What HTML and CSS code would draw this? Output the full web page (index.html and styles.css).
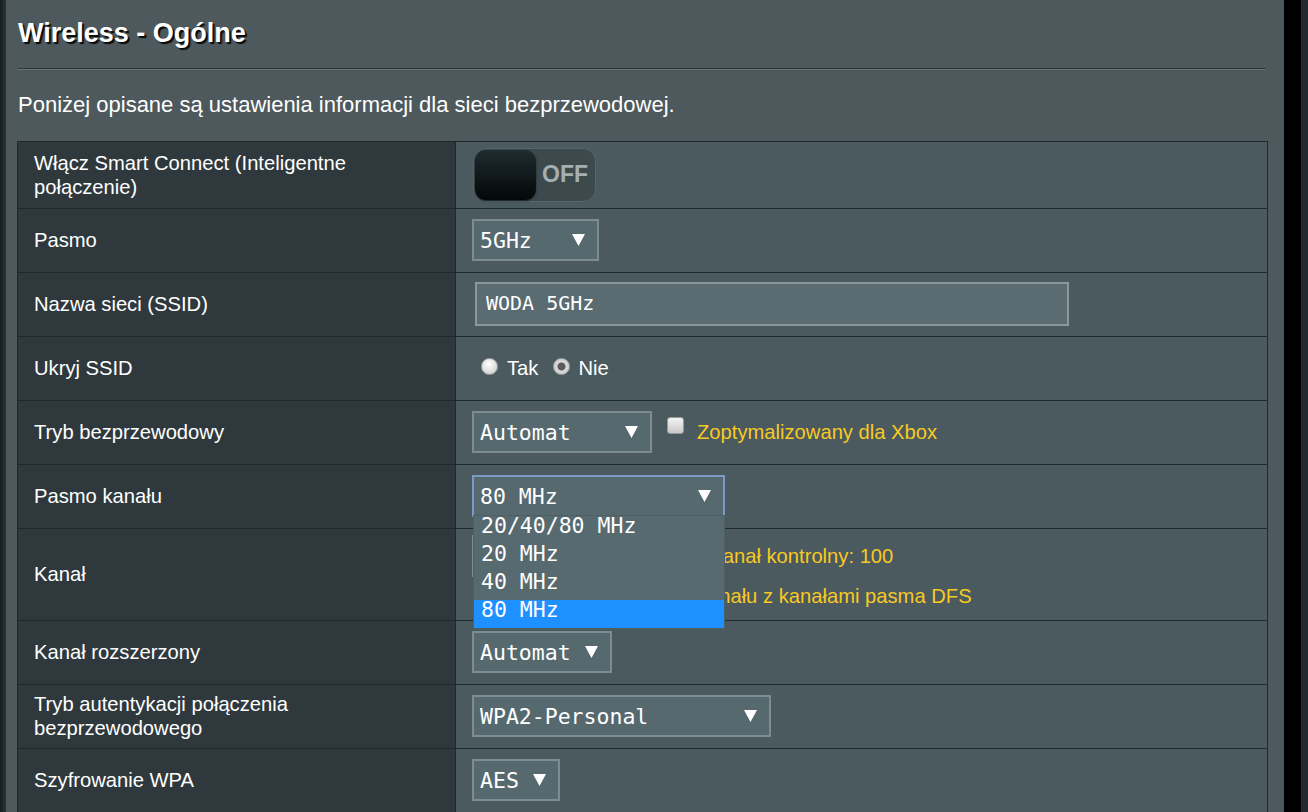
FILE: index.html
```html
<!DOCTYPE html>
<html lang="pl">
<head>
<meta charset="utf-8">
<title>Wireless - Ogólne</title>
<link rel="stylesheet" href="styles.css">
</head>
<body>
<div class="page">
  <div class="edge-left"></div>
  <main class="panel">
    <h1 class="title">Wireless - Ogólne</h1>
    <div class="divider"></div>
    <p class="desc">Poniżej opisane są ustawienia informacji dla sieci bezprzewodowej.</p>

    <div class="settings">
      <div class="row row-first">
        <div class="label">Włącz Smart Connect (Inteligentne połączenie)</div>
        <div class="value">
          <div class="toggle"><span class="knob"></span><span class="toggle-text">OFF</span></div>
        </div>
      </div>

      <div class="row">
        <div class="label">Pasmo</div>
        <div class="value">
          <div class="select w-band"><span>5GHz</span><svg class="arrow" viewBox="0 0 13 12" width="13" height="12"><polygon points="0,0 13,0 6.5,12"/></svg></div>
        </div>
      </div>

      <div class="row">
        <div class="label">Nazwa sieci (SSID)</div>
        <div class="value">
          <input class="ssid" type="text" value="WODA 5GHz">
        </div>
      </div>

      <div class="row">
        <div class="label">Ukryj SSID</div>
        <div class="value">
          <span class="radio"></span><span class="radio-label">Tak</span>
          <span class="radio checked"></span><span class="radio-label">Nie</span>
        </div>
      </div>

      <div class="row">
        <div class="label">Tryb bezprzewodowy</div>
        <div class="value">
          <div class="select w-mode"><span>Automat</span><svg class="arrow" viewBox="0 0 13 12" width="13" height="12"><polygon points="0,0 13,0 6.5,12"/></svg></div>
          <span class="checkbox cb-xbox"></span><span class="hint hint-xbox">Zoptymalizowany dla Xbox</span>
        </div>
      </div>

      <div class="row">
        <div class="label">Pasmo kanału</div>
        <div class="value">
          <div class="select-wrap">
            <div class="select w-width focus"><span>80 MHz</span><svg class="arrow" viewBox="0 0 13 12" width="13" height="12"><polygon points="0,0 13,0 6.5,12"/></svg></div>
            <ul class="dropdown">
              <li class="opt">20/40/80 MHz</li>
              <li class="opt">20 MHz</li>
              <li class="opt">40 MHz</li>
              <li class="opt selected">80 MHz</li>
            </ul>
          </div>
        </div>
      </div>

      <div class="row row-channel">
        <div class="label">Kanał</div>
        <div class="value value-channel">
          <div class="line">
            <div class="select fit"><span>Automat</span><svg class="arrow" viewBox="0 0 13 12" width="13" height="12"><polygon points="0,0 13,0 6.5,12"/></svg></div>
            <span class="hint hint-channel">Aktualny kanał kontrolny: 100</span>
          </div>
          <div class="line line-dfs">
            <span class="checkbox cb-dfs"></span><span class="hint">Automatyczny wybór kanału z kanałami pasma DFS</span>
          </div>
        </div>
      </div>

      <div class="row">
        <div class="label">Kanał rozszerzony</div>
        <div class="value">
          <div class="select fit"><span>Automat</span><svg class="arrow" viewBox="0 0 13 12" width="13" height="12"><polygon points="0,0 13,0 6.5,12"/></svg></div>
        </div>
      </div>

      <div class="row">
        <div class="label">Tryb autentykacji połączenia bezprzewodowego</div>
        <div class="value">
          <div class="select w-auth"><span>WPA2-Personal</span><svg class="arrow" viewBox="0 0 13 12" width="13" height="12"><polygon points="0,0 13,0 6.5,12"/></svg></div>
        </div>
      </div>

      <div class="row">
        <div class="label">Szyfrowanie WPA</div>
        <div class="value">
          <div class="select fit"><span>AES</span><svg class="arrow" viewBox="0 0 13 12" width="13" height="12"><polygon points="0,0 13,0 6.5,12"/></svg></div>
        </div>
      </div>
    </div>
  </main>
  <div class="scrollbar"></div>
  <div class="edge-right"></div>
</div>
</body>
</html>
```

FILE: styles.css
```css
html, body {
  margin: 0;
  padding: 0;
}

body {
  background: #1e2a2e;
  font-family: "Liberation Sans", Arial, sans-serif;
  color: #ffffff;
}

.page {
  display: flex;
  height: 812px;
  overflow: hidden;
}

.edge-left {
  width: 6px;
  flex: none;
  background: linear-gradient(to right, #141c1f, #2b3539);
}

.panel {
  flex: 1;
  min-width: 0;
  background: #4d595d;
  padding: 17px 16px 0 11px;
  overflow: hidden;
}

.scrollbar {
  width: 17px;
  flex: none;
  background: #000000;
}

.edge-right {
  width: 7px;
  flex: none;
  background: #1f2b2f;
}

.title {
  margin: 0 0 0 1px;
  font-size: 27px;
  line-height: 32px;
  font-weight: bold;
  color: #ffffff;
  text-shadow: 2px 2px 1px rgba(0, 0, 0, 0.9);
}

.divider {
  margin: 19px 2px 0 1px;
  height: 1px;
  background: #2a3337;
  border-bottom: 1px solid #6b777b;
}

.desc {
  margin: 22px 0 0 1px;
  font-size: 22px;
  line-height: 26px;
  color: #ffffff;
}

.settings {
  margin-top: 23px;
  border: 1px solid #1f282b;
  border-bottom: none;
}

.row {
  display: grid;
  grid-template-columns: 438px 1fr;
  height: 64px;
  box-sizing: border-box;
  border-top: 1px solid #1f282b;
}

.row-first {
  height: 66px;
  border-top: none;
}

.row-channel {
  height: 92px;
}

.label {
  background: #2f393d;
  border-right: 1px solid #1f282b;
  padding: 0 14px 1px 16px;
  display: flex;
  align-items: center;
  font-size: 20.2px;
  line-height: 24px;
  color: #ffffff;
}

.value {
  background: #4a5a5f;
  display: flex;
  align-items: center;
  padding: 0 0 1px 16px;
  min-width: 0;
}

/* toggle */
.toggle {
  margin-left: 1px;
  width: 123px;
  height: 54px;
  box-sizing: border-box;
  border-radius: 13px;
  background: #3c494d;
  border: 1px solid #55656a;
  display: flex;
  align-items: center;
  padding: 0 1px;
}

.knob {
  width: 61px;
  height: 50px;
  border-radius: 11px;
  background: linear-gradient(to bottom, #1f2c30, #030708);
  box-shadow: 0 1px 2px rgba(0, 0, 0, 0.6);
}

.toggle-text {
  margin-left: 6px;
  font-size: 23px;
  font-weight: bold;
  color: #a5aeb0;
}

/* selects */
.select {
  display: flex;
  align-items: center;
  height: 42px;
  box-sizing: border-box;
  border: 2px solid #7c8c91;
  background: #56696f;
  padding: 0 12px 0 6px;
  font-family: "DejaVu Sans Mono", "Liberation Mono", monospace;
  font-size: 21.5px;
  color: #ffffff;
  white-space: nowrap;
}

.select .arrow {
  margin-left: auto;
  fill: #ffffff;
  flex: none;
}

.select.fit .arrow {
  margin-left: 14px;
}

.w-band { width: 127px; }
.w-mode { width: 180px; }
.w-width { width: 253px; }
.w-auth { width: 299px; }

.select.focus {
  border-color: #7b9bc6;
}

.select-wrap {
  position: relative;
}

.dropdown {
  position: absolute;
  left: 2px;
  top: 41px;
  z-index: 10;
  width: 250px;
  margin: 0;
  padding: 0;
  list-style: none;
  background: #576a70;
  box-shadow: 0 0 0 1px #4e6066;
  font-family: "DejaVu Sans Mono", "Liberation Mono", monospace;
  font-size: 21.5px;
  color: #ffffff;
}

.opt {
  height: 28px;
  box-sizing: border-box;
  line-height: 20px;
  padding: 0 0 8px 7px;
  white-space: nowrap;
}

.opt.selected {
  background: #1e90ff;
}

/* ssid */
.ssid {
  margin: 0 0 0 3px;
  width: 594px;
  height: 44px;
  box-sizing: border-box;
  border: 2px solid #8a989c;
  background: #5a6c72;
  padding: 0 0 2px 9px;
  font-family: "DejaVu Sans Mono", "Liberation Mono", monospace;
  font-size: 20px;
  color: #ffffff;
  outline: none;
}

/* radios */
.radio {
  width: 17px;
  height: 17px;
  box-sizing: border-box;
  border-radius: 50%;
  border: 1px solid #a4a4a4;
  background: radial-gradient(circle at 45% 35%, #ffffff 0, #e6e6e6 45%, #c4c4c4 100%);
  margin: -3px 0 0 9px;
  flex: none;
}

.radio.checked {
  background: radial-gradient(circle at 50% 50%, #5b5b5b 0, #5b5b5b 3.5px, #dadada 4.5px, #c2c2c2 100%);
  margin-left: 15px;
}

.radio-label {
  margin-left: 9px;
  font-size: 20.2px;
  line-height: 24px;
  color: #ffffff;
}

.radio.checked + .radio-label {
  margin-left: 8px;
}

/* checkbox */
.checkbox {
  width: 17px;
  height: 17px;
  box-sizing: border-box;
  border-radius: 3px;
  border: 1px solid #9a9a9a;
  background: linear-gradient(to bottom, #f2f2f2, #c9c9c9);
  flex: none;
}

.cb-xbox {
  margin: 0 0 13px 15px;
}

.cb-dfs {
  margin-left: 4px;
}

.hint {
  font-size: 20.2px;
  line-height: 24px;
  color: #f9c922;
  white-space: nowrap;
  margin-left: 13px;
}

.hint-xbox {
  margin-left: 13px;
}

.hint-channel {
  margin-left: 18px;
}

/* channel row */
.value-channel {
  flex-direction: column;
  align-items: flex-start;
  justify-content: flex-start;
  padding-top: 6px;
}

.line {
  display: flex;
  align-items: center;
}

.line-dfs {
  margin-top: 7px;
}
```
